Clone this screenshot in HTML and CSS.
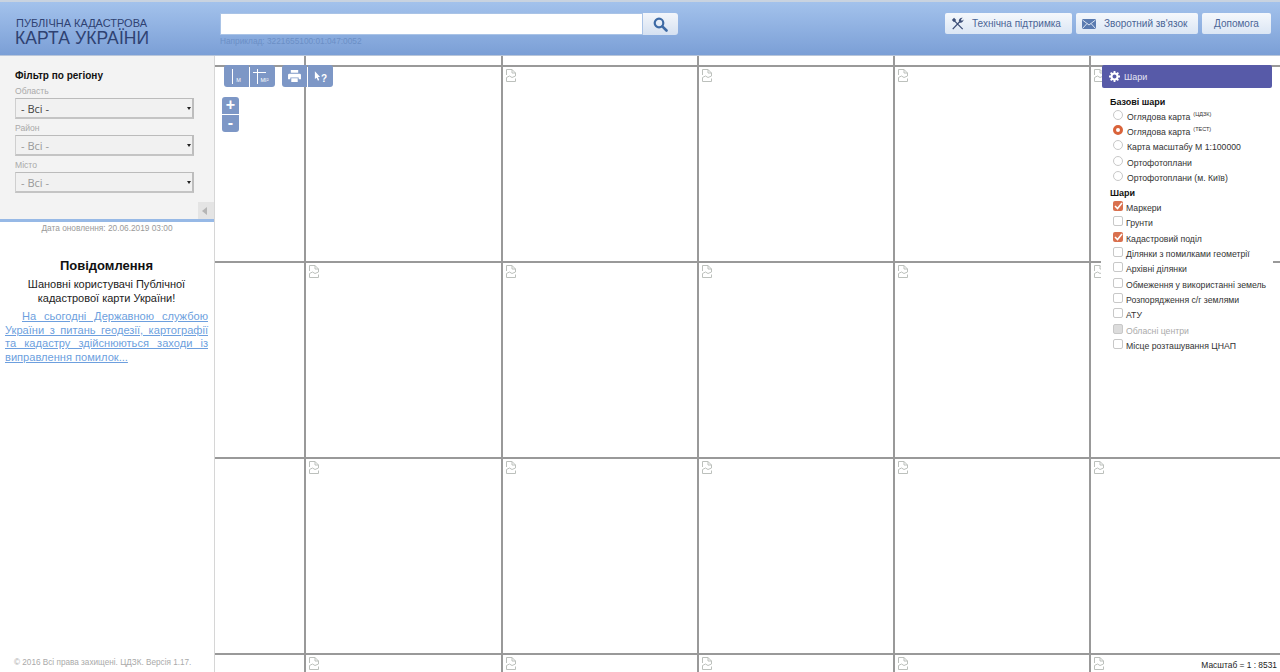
FILE: index.html
```html
<html>
<head>
	<title>Публічна кадастрова карта України</title>
	<meta charset="utf-8">
	<link rel="stylesheet" href="styles.css">
</head>
<body>
	<svg class="defs" width="0" height="0">
		<symbol id="broken" viewBox="0 0 10 13">
			<path d="M.5.5h5.500l3.500 3.500v3M.5.5v5.500M6 .5v3.500h3.500M.5 8.500v4h9v-3M.5 8.500l3-1.500 2.500 1.500 3.500-1.500" fill="none" stroke="#bcc0bc"/>
		</symbol>
	</svg>
	<header class="top">
		<div class="logo">
			<div class="logo-small">ПУБЛІЧНА КАДАСТРОВА</div>
			<div class="logo-big">КАРТА УКРАЇНИ</div>
		</div>
		<div class="search">
			<div class="search-row">
				<input type="text" class="search-input">
				<button class="search-btn">
					<svg width="15" height="15" viewBox="0 0 15 15"><circle cx="6" cy="6" r="4.300" fill="none" stroke="#3d6aa5" stroke-width="2.200"/><path d="M9.300 9.300l4.200 4.200" stroke="#3d6aa5" stroke-width="2.600" stroke-linecap="round"/></svg>
				</button>
			</div>
			<div class="search-hint">Наприклад: 3221655100:01:047:0052</div>
		</div>
		<nav class="top-nav">
			<a class="nav-btn nav-support">
				<svg width="13" height="13" viewBox="0 0 15 15"><path d="M2 14L10 5.500M13.500 14L4 4.500" stroke="#3d4f78" stroke-width="1.500" fill="none"/><path d="M1 3.500L3.500 1 6 3.500 3.500 6zM9 4.500C9 2.500 11 .5 13.500 1L11.500 3 12.500 4.500 14.500 3C14.500 5.500 12 7.500 10 6.500z" fill="#3d4f78"/></svg>
				Технічна підтримка
			</a>
			<a class="nav-btn nav-feedback">
				<svg width="14" height="10" viewBox="0 0 14 10"><rect width="14" height="10" rx="1" fill="#5a7bb0"/><path d="M.5 1L7 6l6.500-5M.5 9.500L5 4.500M13.500 9.500L9 4.500" stroke="#e8eef7" stroke-width=".9" fill="none"/></svg>
				Зворотний зв'язок
			</a>
			<a class="nav-btn nav-help">Допомога</a>
		</nav>
	</header>
	<div class="main">
		<aside class="side">
			<div class="filter">
				<h3 class="filter-title">Фільтр по регіону</h3>
				<label class="filter-label">Область</label>
				<div class="sel"><select><option>- Всі -</option></select></div>
				<label class="filter-label">Район</label>
				<div class="sel sel-off"><select disabled><option>- Всі -</option></select></div>
				<label class="filter-label">Місто</label>
				<div class="sel sel-off"><select disabled><option>- Всі -</option></select></div>
				<div class="collapse-row"><span class="collapse-btn"></span></div>
			</div>
			<div class="updated">Дата оновлення: 20.06.2019 03:00</div>
			<div class="notice">
				<h2 class="notice-title">Повідомлення</h2>
				<p class="notice-hello">Шановні користувачі Публічної<br>кадастрової карти України!</p>
				<p class="notice-text"><a href="#">На сьогодні Державною службою України з питань геодезії, картографії та кадастру здійснюються заходи із виправлення помилок...</a></p>
			</div>
			<div class="copy">© 2016 Всі права захищені. ЦДЗК. Версія 1.17.</div>
		</aside>
		<section class="map">
			<div class="tiles" id="tiles"></div>
			<div class="tools">
				<span class="tool tool-l"><b class="bar"></b><small>М</small></span>
				<span class="tool tool-r"><b class="bar bar-t"></b><small>МІ²</small></span>
				<span class="tool tool-print tool-l">
					<svg width="13" height="12" viewBox="0 0 14 13"><path d="M3 0h8v3H3zM1.500 4h11A1.500 1.500 0 0 1 14 5.500V10h-2.500V8h-9v2H0V5.500A1.500 1.500 0 0 1 1.500 4zM3.500 9h7v4h-7z" fill="#fff"/></svg>
				</span>
				<span class="tool tool-r tool-info">
					<svg width="7" height="10" viewBox="0 0 8 11"><path d="M1 0l6 6.500H4.500L6 10 4.500 11 3 7.500 1 9z" fill="#fff"/></svg><i>?</i>
				</span>
			</div>
			<div class="zoom">
				<span class="zoom-btn zoom-in">+</span>
				<span class="zoom-btn zoom-out">-</span>
			</div>
			<div class="layers">
				<div class="layers-head">
					<svg width="11" height="11" viewBox="0 0 12 12"><circle cx="6" cy="6" r="3.300" fill="none" stroke="#fff" stroke-width="2.200"/><path d="M6 0v2.500M6 9.500V12M0 6h2.500M9.500 6H12M1.800 1.800l1.800 1.800M8.400 8.400l1.800 1.800M1.800 10.200l1.800-1.800M8.400 3.600l1.800-1.800" stroke="#fff" stroke-width="2"/></svg>
					Шари
				</div>
				<div class="layers-body">
					<h4 class="layers-title">Базові шари</h4>
					<div class="opt"><span class="radio"></span>Оглядова карта <sup>(ЦДЗК)</sup></div>
					<div class="opt"><span class="radio on"></span>Оглядова карта <sup>(ТЕСТ)</sup></div>
					<div class="opt"><span class="radio"></span>Карта масштабу М 1:100000</div>
					<div class="opt"><span class="radio"></span>Ортофотоплани</div>
					<div class="opt"><span class="radio"></span>Ортофотоплани (м. Київ)</div>
					<h4 class="layers-title title-2">Шари</h4>
					<div class="opt opt-c"><span class="check on"><svg width="9" height="8" viewBox="0 0 9 8"><path d="M1 4l2.500 2.500L8 1" fill="none" stroke="#fff" stroke-width="1.600"/></svg></span>Маркери</div>
					<div class="opt opt-c"><span class="check"></span>Грунти</div>
					<div class="opt opt-c"><span class="check on"><svg width="9" height="8" viewBox="0 0 9 8"><path d="M1 4l2.500 2.500L8 1" fill="none" stroke="#fff" stroke-width="1.600"/></svg></span>Кадастровий поділ</div>
					<div class="opt opt-c"><span class="check"></span>Ділянки з помилками геометрії</div>
					<div class="opt opt-c"><span class="check"></span>Архівні ділянки</div>
					<div class="opt opt-c"><span class="check"></span>Обмеження у використанні земель</div>
					<div class="opt opt-c"><span class="check"></span>Розпорядження с/г землями</div>
					<div class="opt opt-c"><span class="check"></span>АТУ</div>
					<div class="opt opt-c opt-off"><span class="check off"></span>Обласні центри</div>
					<div class="opt opt-c"><span class="check"></span>Місце розташування ЦНАП</div>
				</div>
			</div>
			<div class="scale">Масштаб = 1 : 8531</div>
		</section>
	</div>
	<script>
		// сітка тайлів карти: 6 колонок, 5 рядів
		var tiles = document.getElementById("tiles");
		var html = "";
		for(var r = 0; r < 5; r++){
			for(var c = 0; c < 6; c++){
				html += '<div class="tile">';
				if(r > 0 && c > 0){
					html += '<svg class="tile-icon" width="10" height="13"><use href="#broken"/></svg>';
				}
				html += '</div>';
			}
		}
		tiles.innerHTML = html;
	</script>
</body>
</html>
```

FILE: styles.css
```css
* {
	box-sizing: border-box;
}

html, body {
	height: 100%;
}

body {
	margin: 0;
	overflow: hidden;
	background: #fff;
	font-family: "Liberation Sans", Arial, sans-serif;
	font-size: 11px;
	color: #222;
}

.defs {
	position: absolute;
}

/* header */
.top {
	display: flex;
	height: 56px;
	padding-top: 11px;
	background: linear-gradient(#a3c2ec, #7b9fd6);
	border-top: 2px solid #c9d3e0;
	border-bottom: 1px solid #b9c6da;
}

.logo {
	width: 220px;
	padding: 4px 0 0 15px;
	color: #2f4272;
}

.logo-small {
	padding-left: 1px;
	font-size: 11px;
	line-height: 13px;
}

.logo-big {
	font-size: 17.500px;
	line-height: 17px;
	letter-spacing: .1px;
}

.search {
	width: 458px;
}

.search-row {
	display: flex;
	height: 22px;
}

.search-input {
	width: 423px;
	height: 22px;
	border: 1px solid #a9c3e6;
	background: #fff;
}

.search-btn {
	width: 35px;
	height: 22px;
	padding: 0;
	border: 0;
	border-radius: 0 3px 3px 0;
	background: linear-gradient(#f3f6fb, #d5e1f1);
}

.search-hint {
	margin-top: 1px;
	font-size: 8.300px;
	color: #6b8fc6;
}

.top-nav {
	display: flex;
	margin-left: 267px;
	gap: 4px;
}

.nav-btn {
	display: flex;
	align-items: center;
	height: 21px;
	border-radius: 2px;
	background: linear-gradient(#f5f8fc, #dbe6f4);
	font-size: 10px;
	color: #4a6596;
}

.nav-support {
	width: 127px;
	padding-left: 6px;
	gap: 8px;
}

.nav-feedback {
	width: 122px;
	padding-left: 6px;
	gap: 8px;
}

.nav-help {
	width: 69px;
	justify-content: center;
}

.main {
	display: flex;
	height: 616px;
}

/* left column */
.side {
	display: flex;
	flex-direction: column;
	width: 215px;
	border-right: 1px solid #d6d6d6;
}

.filter {
	height: 166px;
	padding: 14px 20px 0 15px;
	background: #f3f3f3;
	border-bottom: 3px solid #97b9e6;
}

.filter-title {
	margin: 0;
	font-size: 10px;
	line-height: 12px;
	color: #111;
}

.filter-label {
	display: block;
	height: 16px;
	padding-top: 3px;
	font-size: 8.600px;
	line-height: 12px;
	color: #aaa;
}

.sel {
	position: relative;
	width: 179px;
	height: 21px;
	border: 1px solid #cfcfcf;
	border-top-color: #bbb;
	border-right: 2px solid #bdbdbd;
	border-bottom: 2px solid #c4c4c4;
}

.sel select {
	width: 100%;
	height: 100%;
	padding: 0 0 0 5px;
	border: 0;
	appearance: none;
	background: #f1f1f1;
	font-family: "Open Sans", sans-serif;
	font-size: 11px;
	color: #444;
}

.sel-off select {
	color: #999;
	opacity: 1;
}

.sel:after {
	content: "";
	position: absolute;
	right: 1px;
	top: 8px;
	border: 2.500px solid transparent;
	border-top: 3px solid #222;
	border-bottom: 0;
}

.collapse-row {
	display: flex;
	justify-content: flex-end;
	margin: 9px -20px 0 0;
}

.collapse-btn {
	position: relative;
	width: 16px;
	height: 17px;
	background: #e4e4e4;
}

.collapse-btn:after {
	content: "";
	position: absolute;
	left: 4px;
	top: 5px;
	border: 4px solid transparent;
	border-right: 5px solid #b5b5b5;
	border-left: 0;
}

.updated {
	margin-top: 1px;
	text-align: center;
	font-size: 8.300px;
	line-height: 11px;
	color: #999;
}

.notice {
	padding: 0 6px 0 5px;
}

.notice-title {
	margin: 24px 0 4px;
	text-align: center;
	font-size: 13px;
	line-height: 15px;
	color: #111;
}

.notice-hello {
	margin: 0;
	text-align: center;
	font-size: 11px;
	line-height: 14px;
	color: #222;
}

.notice-text {
	margin: 5px 0 0;
	text-align: justify;
	text-indent: 17px;
	font-size: 11.100px;
	line-height: 13.500px;
}

.notice-text a {
	color: #6d9fde;
}

.copy {
	margin-top: auto;
	padding: 0 0 4px 14px;
	font-size: 8.200px;
	line-height: 11px;
	color: #aaa;
}

/* map */
.map {
	position: relative;
	flex: 1;
	overflow: hidden;
	background: #fff;
}

.tiles {
	display: grid;
	grid-template-columns: 91px 197px repeat(4, 196px);
	grid-template-rows: 11px repeat(4, 196px);
}

.tile {
	position: relative;
	border-right: 2px solid #999;
	border-bottom: 2px solid #999;
}

.tile-icon {
	position: absolute;
	left: 3px;
	top: 2px;
}

.tools {
	position: absolute;
	left: 9px;
	top: 9px;
	display: flex;
}

.tool {
	display: flex;
	align-items: center;
	justify-content: center;
	width: 25px;
	height: 22px;
	margin-right: 1px;
	background: #7d97c6;
	color: #fff;
}

.tool-l {
	border-radius: 3px 0 0 3px;
}

.tool-r {
	border-radius: 0 3px 3px 0;
}

.tool-print {
	margin-left: 6px;
}

.bar {
	width: 1px;
	height: 15px;
	background: #fff;
}

.bar-t {
	position: relative;
}

.bar-t:after {
	content: "";
	position: absolute;
	left: -4px;
	top: 3px;
	width: 13px;
	height: 1px;
	background: #fff;
}

.tool small {
	margin: 7px 0 0 3px;
	font-size: 5.500px;
}

.tool-info i {
	margin-top: 4px;
	font-style: normal;
	font-weight: bold;
	font-size: 10px;
}

.zoom {
	position: absolute;
	left: 7px;
	top: 41px;
	display: flex;
	flex-direction: column;
	gap: 1px;
}

.zoom-btn {
	width: 17px;
	height: 17px;
	background: #7d97c6;
	text-align: center;
	font-weight: bold;
	font-size: 16px;
	line-height: 16px;
	color: #fff;
}

.zoom-in {
	border-radius: 3px 3px 0 0;
}

.zoom-out {
	border-radius: 0 0 3px 3px;
}

.layers {
	position: absolute;
	left: 887px;
	top: 9px;
	width: 170px;
}

.layers-head {
	display: flex;
	align-items: center;
	gap: 4px;
	height: 23px;
	padding-left: 7px;
	border-radius: 2px;
	background: #575aa8;
	font-size: 9px;
	color: #e4e4f4;
}

.layers-body {
	margin-left: -1px;
	width: 172px;
	padding: 7px 0 0 9px;
	background: #fff;
}

.layers-title {
	margin: 0;
	font-size: 9px;
	line-height: 14px;
	color: #111;
}

.title-2 {
	margin-top: 1px;
}

.opt {
	display: flex;
	align-items: center;
	height: 15.300px;
	padding-left: 3px;
	white-space: nowrap;
	font-size: 8.700px;
	color: #333;
}

.opt sup {
	margin: -5px 0 0 3px;
	font-size: 5.500px;
}

.opt-off {
	color: #aaa;
}

.radio {
	flex: none;
	width: 10px;
	height: 10px;
	margin: -4px 4px 0 0;
	border: 1px solid #c8c8c8;
	border-radius: 50%;
	background: #fff;
}

.radio.on {
	border: 3px solid #d9633a;
}

.check {
	display: flex;
	flex: none;
	align-items: center;
	justify-content: center;
	width: 10px;
	height: 10px;
	margin: -4px 3px 0 0;
	border: 1px solid #c8c8c8;
	border-radius: 2px;
	background: #fff;
}

.check.on {
	border: 0;
	background: #d9704e;
}

.check.off {
	background: #dcdcdc;
}

.scale {
	position: absolute;
	right: 3px;
	bottom: 1px;
	padding-left: 4px;
	background: #fff;
	font-size: 8.400px;
	line-height: 12px;
	color: #222;
}
```
